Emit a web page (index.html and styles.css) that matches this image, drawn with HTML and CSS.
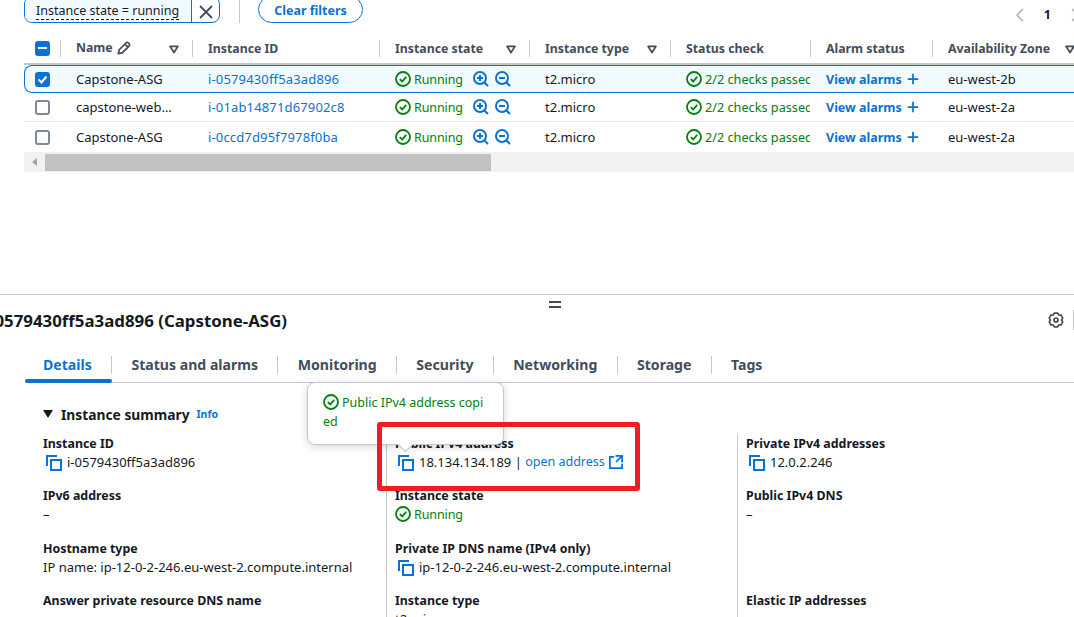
FILE: index.html
```html
<!DOCTYPE html>
<html lang="en">
<head>
<meta charset="utf-8">
<title>Instances</title>
<link rel="stylesheet" href="styles.css">
</head>
<body>
<svg class="defs" width="0" height="0" aria-hidden="true">
  <defs>
    <symbol id="ok" viewBox="0 0 16 16"><circle cx="8" cy="8" r="7" fill="none" stroke="currentColor" stroke-width="1.8"/><path d="M4.8 8.2 7.2 10.5 11.2 5.8" fill="none" stroke="currentColor" stroke-width="1.8"/></symbol>
    <symbol id="zin" viewBox="0 0 16 16"><circle cx="7" cy="7" r="6" fill="none" stroke="currentColor" stroke-width="2"/><path d="M11.2 11.2 15 15M7 4v6M4 7h6" fill="none" stroke="currentColor" stroke-width="2"/></symbol>
    <symbol id="zout" viewBox="0 0 16 16"><circle cx="7" cy="7" r="6" fill="none" stroke="currentColor" stroke-width="2"/><path d="M11.2 11.2 15 15M4 7h6" fill="none" stroke="currentColor" stroke-width="2"/></symbol>
    <symbol id="copy" viewBox="0 0 16 16"><path d="M1 11V1h10" fill="none" stroke="currentColor" stroke-width="2"/><rect x="5" y="5" width="10" height="10" fill="none" stroke="currentColor" stroke-width="2"/></symbol>
    <symbol id="caret" viewBox="0 0 16 16"><path d="M3.5 5h9L8 12z" fill="none" stroke="currentColor" stroke-width="2" stroke-linejoin="round"/></symbol>
    <symbol id="plus" viewBox="0 0 16 16"><path d="M8 2v12M2 8h12" fill="none" stroke="currentColor" stroke-width="2"/></symbol>
  </defs>
</svg>

<main class="page">
  <section class="list">
    <div class="filters">
      <div class="chip">
        <span class="chip-label"><span class="chip-text">Instance state = running</span></span>
        <span class="chip-x"><svg width="14" height="14" viewBox="0 0 14 14"><path d="M1 1l12 12M13 1 1 13" fill="none" stroke="currentColor" stroke-width="1.8"/></svg></span>
      </div>
      <span class="filter-sep"></span>
      <span class="clear-btn">Clear filters</span>
      <div class="pager">
        <svg class="pager-prev" width="10" height="14" viewBox="0 0 10 14"><path d="M8 1 2 7l6 6" fill="none" stroke="currentColor" stroke-width="1.6"/></svg>
        <span class="pager-num">1</span>
        <svg class="pager-next" width="10" height="14" viewBox="0 0 10 14"><path d="M2 1l6 6-6 6" fill="none" stroke="currentColor" stroke-width="1.6"/></svg>
      </div>
    </div>

    <div class="table">
      <div class="row head">
        <div class="cell check"><span class="box indet"></span></div>
        <div class="cell hd name-hd"><span>Name</span><svg class="pencil" width="14" height="14" viewBox="0 0 16 16"><path d="M1.500 14.500l1-4.500L10.500 2a1.600 1.600 0 0 1 2.300 0l1.200 1.200a1.600 1.600 0 0 1 0 2.300L6 13.500zM9 3.500 12.500 7" fill="none" stroke="currentColor" stroke-width="2" stroke-linejoin="round"/></svg><svg class="caret" width="14" height="14"><use href="#caret"/></svg></div>
        <div class="cell hd">Instance ID</div>
        <div class="cell hd">Instance state<svg class="caret" width="14" height="14"><use href="#caret"/></svg></div>
        <div class="cell hd">Instance type<svg class="caret" width="14" height="14"><use href="#caret"/></svg></div>
        <div class="cell hd">Status check</div>
        <div class="cell hd">Alarm status</div>
        <div class="cell hd">Availability Zone<svg class="caret" width="14" height="14"><use href="#caret"/></svg></div>
      </div>

      <div class="row selected">
        <div class="cell check"><span class="box on"><svg width="11" height="11" viewBox="0 0 11 11"><path d="M1.500 5.500 4.500 8.500 9.500 2.500" fill="none" stroke="#fff" stroke-width="2"/></svg></span></div>
        <div class="cell">Capstone-ASG</div>
        <div class="cell link">i-0579430ff5a3ad896</div>
        <div class="cell"><svg class="i-ok" width="16" height="16"><use href="#ok"/></svg><span class="green run">Running</span><svg class="i-zin" width="16" height="16"><use href="#zin"/></svg><svg class="i-zout" width="16" height="16"><use href="#zout"/></svg></div>
        <div class="cell">t2.micro</div>
        <div class="cell clip"><svg class="i-ok" width="16" height="16"><use href="#ok"/></svg><span class="green checks">2/2 checks passed</span></div>
        <div class="cell"><span class="alarm">View alarms</span><svg class="i-plus" width="14" height="14"><use href="#plus"/></svg></div>
        <div class="cell">eu-west-2b</div>
      </div>

      <div class="row">
        <div class="cell check"><span class="box"></span></div>
        <div class="cell">capstone-web…</div>
        <div class="cell link">i-01ab14871d67902c8</div>
        <div class="cell"><svg class="i-ok" width="16" height="16"><use href="#ok"/></svg><span class="green run">Running</span><svg class="i-zin" width="16" height="16"><use href="#zin"/></svg><svg class="i-zout" width="16" height="16"><use href="#zout"/></svg></div>
        <div class="cell">t2.micro</div>
        <div class="cell clip"><svg class="i-ok" width="16" height="16"><use href="#ok"/></svg><span class="green checks">2/2 checks passed</span></div>
        <div class="cell"><span class="alarm">View alarms</span><svg class="i-plus" width="14" height="14"><use href="#plus"/></svg></div>
        <div class="cell">eu-west-2a</div>
      </div>

      <div class="row last">
        <div class="cell check"><span class="box"></span></div>
        <div class="cell">Capstone-ASG</div>
        <div class="cell link">i-0ccd7d95f7978f0ba</div>
        <div class="cell"><svg class="i-ok" width="16" height="16"><use href="#ok"/></svg><span class="green run">Running</span><svg class="i-zin" width="16" height="16"><use href="#zin"/></svg><svg class="i-zout" width="16" height="16"><use href="#zout"/></svg></div>
        <div class="cell">t2.micro</div>
        <div class="cell clip"><svg class="i-ok" width="16" height="16"><use href="#ok"/></svg><span class="green checks">2/2 checks passed</span></div>
        <div class="cell"><span class="alarm">View alarms</span><svg class="i-plus" width="14" height="14"><use href="#plus"/></svg></div>
        <div class="cell">eu-west-2a</div>
      </div>

      <div class="scrollbar">
        <svg class="scroll-arrow" width="6" height="8" viewBox="0 0 6 8"><path d="M5 0v8L0 4z" fill="#a3a3a3"/></svg>
        <span class="scroll-thumb"></span>
      </div>
    </div>
  </section>

  <section class="detail">
    <div class="handle"></div>
    <div class="title-row">
      <h2 class="title">i-0579430ff5a3ad896 (Capstone-ASG)</h2>
      <svg class="gear" width="16" height="16" viewBox="0 0 16 16"><path d="M6.300 1.200h3.400l1.100 1.950h2.230l1.700 2.920L13.600 8l1.130 1.930-1.700 2.930H10.800L9.700 14.800H6.300l-1.100-1.950H2.970l-1.700-2.920L2.400 8 1.270 6.070l1.700-2.930H5.200z" fill="none" stroke="currentColor" stroke-width="1.700" stroke-linejoin="round"/><circle cx="8" cy="8" r="2" fill="none" stroke="currentColor" stroke-width="1.700"/></svg>
    </div>

    <nav class="tabs">
      <span class="tab active">Details</span>
      <span class="tab">Status and alarms</span>
      <span class="tab">Monitoring</span>
      <span class="tab">Security</span>
      <span class="tab">Networking</span>
      <span class="tab">Storage</span>
      <span class="tab">Tags</span>
    </nav>

    <h3 class="summary-head"><span class="tri"></span>Instance summary<span class="info">Info</span></h3>

    <div class="grid">
      <div class="col">
        <div class="field"><div class="label">Instance ID</div><div class="value"><svg class="i-copy" width="16" height="16"><use href="#copy"/></svg>i-0579430ff5a3ad896</div></div>
        <div class="field"><div class="label">IPv6 address</div><div class="value">–</div></div>
        <div class="field"><div class="label">Hostname type</div><div class="value">IP name: ip-12-0-2-246.eu-west-2.compute.internal</div></div>
        <div class="field"><div class="label">Answer private resource DNS name</div></div>
      </div>
      <div class="col">
        <div class="field"><div class="label">Public IPv4 address</div><div class="value"><svg class="i-copy" width="16" height="16"><use href="#copy"/></svg>18.134.134.189 |&nbsp;<span class="link open">open address</span><svg class="i-ext" width="14" height="14" viewBox="0 0 16 16"><path d="M15 8.500V1H7.500M15 1 8 8M6 2H1v13h14v-5" fill="none" stroke="currentColor" stroke-width="2"/></svg></div></div>
        <div class="field"><div class="label">Instance state</div><div class="value"><svg class="i-ok" width="16" height="16"><use href="#ok"/></svg><span class="green run">Running</span></div></div>
        <div class="field"><div class="label">Private IP DNS name (IPv4 only)</div><div class="value"><svg class="i-copy" width="16" height="16"><use href="#copy"/></svg>ip-12-0-2-246.eu-west-2.compute.internal</div></div>
        <div class="field"><div class="label">Instance type</div><div class="value">t2.micro</div></div>
      </div>
      <div class="col">
        <div class="field"><div class="label">Private IPv4 addresses</div><div class="value"><svg class="i-copy" width="16" height="16"><use href="#copy"/></svg>12.0.2.246</div></div>
        <div class="field"><div class="label">Public IPv4 DNS</div><div class="value">–</div></div>
        <div class="field"></div>
        <div class="field"><div class="label">Elastic IP addresses</div></div>
      </div>
    </div>

    <div class="tooltip">
      <svg class="i-ok" width="16" height="16"><use href="#ok"/></svg>Public IPv4 address copi<br>ed
      <span class="tooltip-arrow"></span>
    </div>
    <div class="highlight"></div>
  </section>
</main>
</body>
</html>
```

FILE: styles.css
```css
* { box-sizing: border-box; }
html, body { margin: 0; padding: 0; background: #fff; }
body {
  width: 1074px;
  height: 617px;
  overflow: hidden;
  font-family: "Noto Sans", "Open Sans", sans-serif;
  font-size: 13px;
  color: #16191f;
}
.defs { position: absolute; }
.page { display: flex; flex-direction: column; height: 617px; }
svg { flex: none; display: block; }

/* top list */
.list { height: 294px; padding-left: 24px; flex: none; }
.filters { display: flex; align-items: center; height: 23px; }
.chip {
  display: flex; width: 196px; height: 27px; margin-top: -4px;
  border: 1px solid #0972d3; border-radius: 8px; overflow: hidden;
}
.chip-label { width: 167px; background: #f1faff; padding: 5px 0 0 11px; border-right: 1px solid #0972d3; font-size: 12.5px; line-height: 18px; color: #16191f; }
.chip-text { border-bottom: 1px dashed #16191f; display: inline-block; line-height: 16px; }
.chip-x { flex: 1; display: flex; align-items: center; justify-content: center; padding-top: 4px; color: #414d5c; }
.filter-sep { width: 1px; height: 23px; background: #c6c6cd; margin-left: 19px; }
.clear-btn {
  margin-left: 18px; width: 105px; height: 27px; margin-top: -4px; padding-top: 5px;
  border: 1px solid #0972d3; border-radius: 14px; color: #0972d3;
  font-size: 12.5px; font-weight: 700; text-align: center; line-height: 18px;
}
.pager { margin-left: auto; display: flex; align-items: center; padding-top: 6px; margin-right: -6px; gap: 19px; height: 30px; }
.pager-prev, .pager-next { color: #b4b4bb; }
.pager-num { font-weight: 700; font-size: 12.5px; color: #16191f; }

.table { width: 1050px; overflow: hidden; }
.row {
  display: grid;
  grid-template-columns: 36px 132px 187px 150px 141px 140px 122px 160px;
  height: 29px; align-items: center;
  border-bottom: 1px solid #e9ebed;
}
.row.head { height: 42px; border-bottom: 2px solid #c6c6cd; padding-top: 10px; }
.row.selected {
  height: 28px; border: 1px solid #0972d3; border-right: 0; border-radius: 8px 0 0 8px;
  background: #f1faff;
  grid-template-columns: 35px 132px 187px 150px 141px 140px 122px 160px;
}
.row.last { height: 30px; border-bottom: 0; }
.cell { display: flex; align-items: center; padding-left: 16px; white-space: nowrap; min-width: 0; position: relative; color: #16191f; }
.cell.check { padding-left: 11px; }
.selected .cell.check { padding-left: 10px; }
.cell.hd { font-size: 12.3px; font-weight: 700; color: #414d5c; height: 17px; border-left: 1px solid #c6c6cd; padding-left: 15px; }
.cell.clip { overflow: hidden; }
.name-hd span { margin-top: -2px; }
.pencil { margin-left: 4px; color: #414d5c; }
.caret { position: absolute; right: 11px; top: 2px; color: #414d5c; }
.cell.hd:last-child .caret { right: 15px; }
.cell.link { color: #0972d3; letter-spacing: .15px; }
.link { color: #0972d3; }
.green { color: #037f0c; }
.run { font-size: 12.5px; letter-spacing: -.1px; }
.checks { font-size: 12.7px; }
.i-ok { color: #037f0c; margin-right: 3px; }
.i-zin, .i-zout { color: #0972d3; }
.i-zin { margin-left: 10px; }
.i-zout { margin-left: 6px; }
.alarm { color: #0972d3; font-weight: 700; font-size: 12.5px; }
.i-plus { color: #0972d3; margin-left: 4px; }
.box {
  display: flex; align-items: center; justify-content: center;
  width: 15px; height: 15px; border-radius: 3px; border: 2px solid #7d8998; background: #fff;
}
.box.on, .box.indet { background: #0972d3; border-color: #0972d3; }
.box.indet::after { content: ""; width: 9px; height: 2px; background: #fff; }

.scrollbar { height: 20px; background: #f1f1f1; display: flex; align-items: center; }
.scroll-arrow { margin-left: 8px; }
.scroll-thumb { width: 446px; height: 17px; margin-left: 7px; background: #c1c1c1; }

/* bottom panel */
.detail { flex: 1; position: relative; border-top: 1px solid #c6c6cd; overflow: hidden; }
.handle {
  position: absolute; left: 549px; top: 6px; width: 12px; height: 7px;
  border-top: 2px solid #414d5c; border-bottom: 2px solid #414d5c;
}
.title-row { display: flex; align-items: center; justify-content: space-between; height: 50px; padding-right: 10px; position: relative; }
.title { margin: 0 0 0 -16px; font-size: 16.85px; font-weight: 700; color: #16191f; white-space: nowrap; }
.gear { color: #414d5c; }
.title-row::after { content: ""; position: absolute; right: 0; top: 15px; width: 1px; height: 20px; background: #c6c6cd; }

.tabs { display: flex; margin-left: 25px; height: 38px; border-bottom: 1px solid #c6c6cd; padding-top: 11px; }
.tab {
  position: relative; padding: 0 19.3px; font-size: 14.1px; font-weight: 700; color: #414d5c;
  border-right: 1px solid #c6c6cd; height: 18px; line-height: 18px; white-space: nowrap;
}
.tab:first-child { padding-left: 18px; }
.tab:last-child { border-right: 0; }
.tab.active { color: #0972d3; }
.tab.active::after { content: ""; position: absolute; left: 0; right: -1px; top: 23px; height: 4px; background: #0972d3; border-radius: 2px; }

.summary-head { display: flex; align-items: center; margin: 21px 0 0 43px; height: 20px; font-size: 13.8px; font-weight: 700; color: #16191f; }
.tri { width: 0; height: 0; border-left: 5px solid transparent; border-right: 5px solid transparent; border-top: 8px solid #16191f; margin-right: 8px; }
.info { font-size: 10.5px; color: #0972d3; margin-left: 7px; font-weight: 700; }

.grid { display: grid; grid-template-columns: 361px 351px 1fr; margin: 9.5px 0 0 25px; }
.col { border-left: 1px solid #c6c6cd; padding-left: 8px; }
.col:first-child { border-left: 0; padding-left: 18px; }
.field { height: 52.5px; padding-top: 1px; white-space: nowrap; }
.label { font-size: 12.4px; font-weight: 700; height: 18px; line-height: 18px; color: #16191f; }
.value { display: flex; align-items: center; height: 18px; color: #16191f; }
.open { font-size: 12.5px; }
.i-copy { color: #0972d3; margin: 2px 5px 0 3px; }
.i-ext { color: #0972d3; margin-left: 4px; }

.tooltip {
  position: absolute; left: 307px; top: 87px; width: 197px; height: 63px;
  background: #fff; border: 1px solid #c6c6cd; border-radius: 8px;
  box-shadow: 0 2px 8px rgba(0, 0, 0, .16);
  padding: 10px 8px 0 15px;
  color: #037f0c; font-size: 12.5px; line-height: 19px;
}
.tooltip .i-ok { display: inline-block; vertical-align: -3px; }
.tooltip-arrow {
  position: absolute; left: 92px; bottom: -6px; width: 11px; height: 11px;
  background: #fff; border-right: 1px solid #c6c6cd; border-bottom: 1px solid #c6c6cd;
  transform: rotate(45deg);
}
.highlight {
  position: absolute; left: 377px; top: 127px; width: 263px; height: 69px;
  border: 5px solid #ee1c25; border-radius: 3px;
}
```
